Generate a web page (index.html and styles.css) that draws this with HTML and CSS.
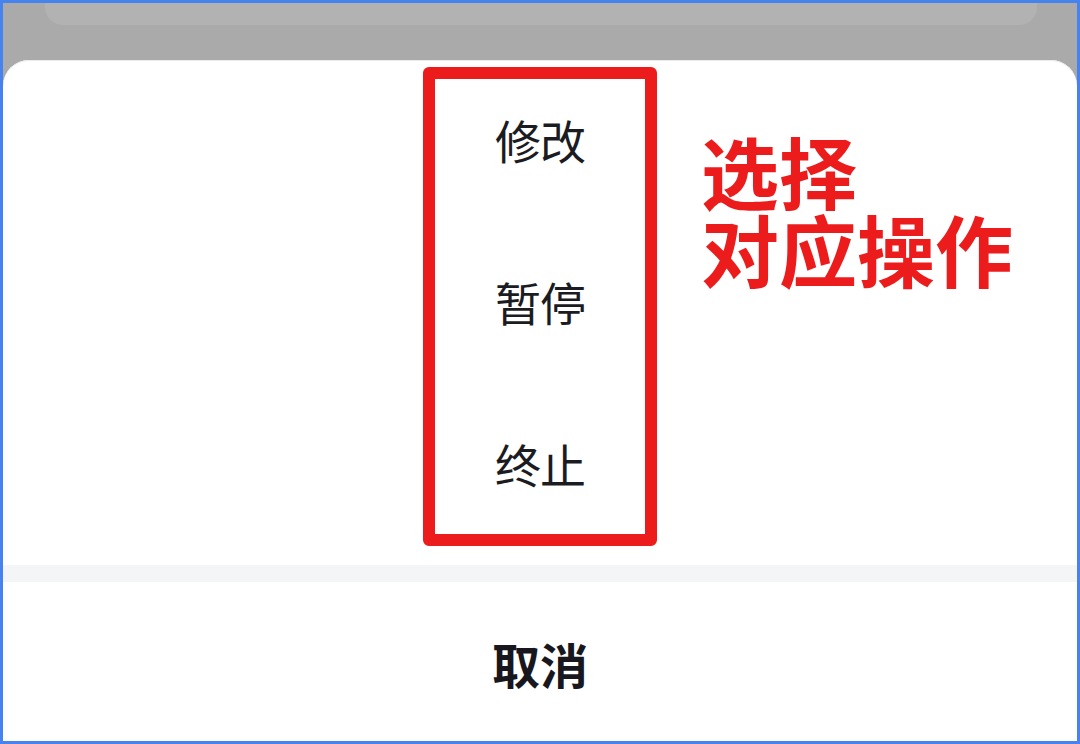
FILE: index.html
```html
<!DOCTYPE html>
<html lang="zh-CN">
<head>
<meta charset="utf-8">
<link rel="stylesheet" href="styles.css">
</head>
<body>
<div class="frame">
  <div class="backdrop">
    <div class="backdrop-card"></div>
  </div>
  <div class="sheet">
    <ul class="options">
      <li class="option">修改</li>
      <li class="option">暂停</li>
      <li class="option">终止</li>
    </ul>
    <div class="divider"></div>
    <div class="cancel">取消</div>
  </div>
  <div class="mark-box"></div>
  <div class="mark-note">
    <div class="mark-line">选择</div>
    <div class="mark-line">对应操作</div>
  </div>
</div>
</body>
</html>
```

FILE: styles.css
```css
* { box-sizing: border-box; }
html, body { margin: 0; padding: 0; }
body {
  width: 1080px;
  height: 744px;
  overflow: hidden;
  font-family: "Noto Sans CJK SC", "Noto Sans", sans-serif;
}
.frame {
  position: relative;
  width: 1080px;
  height: 744px;
  border: 3px solid #4683ee;
  background: #aaaaab;
  display: flex;
  flex-direction: column;
}
.backdrop {
  height: 57px;
  flex: none;
  background: #aaaaab;
  padding: 0 40px 0 42px;
}
.backdrop-card {
  height: 22px;
  background: #b2b2b2;
  border-radius: 0 0 18px 18px;
}
.sheet {
  flex: 1;
  background: #ffffff;
  border-radius: 26px 26px 0 0;
  display: flex;
  flex-direction: column;
  box-shadow: inset 0 1px 0 #e9ebed;
}
.options {
  list-style: none;
  margin: 0;
  padding: 0 0 19px;
}
.option {
  height: 162px;
  padding-bottom: 4px;
  display: flex;
  align-items: center;
  justify-content: center;
  font-size: 46px;
  font-weight: 400;
  color: #1b1b22;
  letter-spacing: -1px;
}
.divider {
  height: 17px;
  background: #f4f5f7;
  flex: none;
}
.cancel {
  flex: 1;
  display: flex;
  align-items: center;
  justify-content: center;
  padding-top: 2px;
  font-size: 48px;
  font-weight: 700;
  color: #17171d;
}
.mark-box {
  position: absolute;
  left: 420px;
  top: 64px;
  width: 234px;
  height: 479px;
  border: 12px solid #ec1c1c;
  border-radius: 6px;
}
.mark-note {
  position: absolute;
  left: 698px;
  top: 128px;
  display: flex;
  flex-direction: column;
  font-size: 78px;
  font-weight: 700;
  color: #ec1c1c;
}
.mark-line {
  height: 78px;
  line-height: 78px;
  white-space: nowrap;
}
```
